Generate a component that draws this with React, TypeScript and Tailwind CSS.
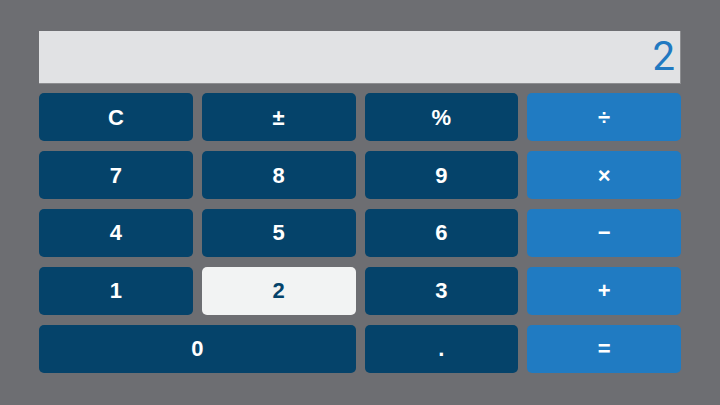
import React, { useState } from "react";

// Simple calculator keypad
const keys = [
  { label: "C", kind: "fn" },
  { label: "±", kind: "fn" },
  { label: "%", kind: "fn" },
  { label: "÷", kind: "op" },
  { label: "7", kind: "num" },
  { label: "8", kind: "num" },
  { label: "9", kind: "num" },
  { label: "×", kind: "op" },
  { label: "4", kind: "num" },
  { label: "5", kind: "num" },
  { label: "6", kind: "num" },
  { label: "−", kind: "op" },
  { label: "1", kind: "num" },
  { label: "2", kind: "num" },
  { label: "3", kind: "num" },
  { label: "+", kind: "op" },
  { label: "0", kind: "num", wide: true },
  { label: ".", kind: "num" },
  { label: "=", kind: "op" },
];

export default function App() {
  const [display] = useState("2");
  const active = "2";

  return (
    <div className="w-[720px] h-[405px] bg-[#6d6e72] flex flex-col gap-[9px] px-[39px] pt-[31px] pb-[32px] font-['Liberation_Sans',Arial,sans-serif]">
      <div className="h-[53px] shrink-0 bg-[#e1e2e4] border-r border-b border-[#8c8d90] flex items-center justify-end pr-[5px]">
        <span className="text-[40px] leading-none text-[#2179c1] font-['Roboto',sans-serif] font-normal">
          {display}
        </span>
      </div>

      <div className="flex-1 grid grid-cols-4 grid-rows-5 gap-x-[9px] gap-y-[9.5px]">
        {keys.map((k) => {
          const isActive = k.label === active;
          const color = isActive
            ? "bg-[#f2f3f3] text-[#05436a]"
            : k.kind === "op"
              ? "bg-[#207bc2] text-white"
              : "bg-[#05436a] text-white";
          return (
            <button
              key={k.label}
              className={`rounded-[5px] flex items-center justify-center text-[22px] font-bold ${color} ${k.wide ? "col-span-2" : ""}`}
            >
              {k.label}
            </button>
          );
        })}
      </div>
    </div>
  );
}
